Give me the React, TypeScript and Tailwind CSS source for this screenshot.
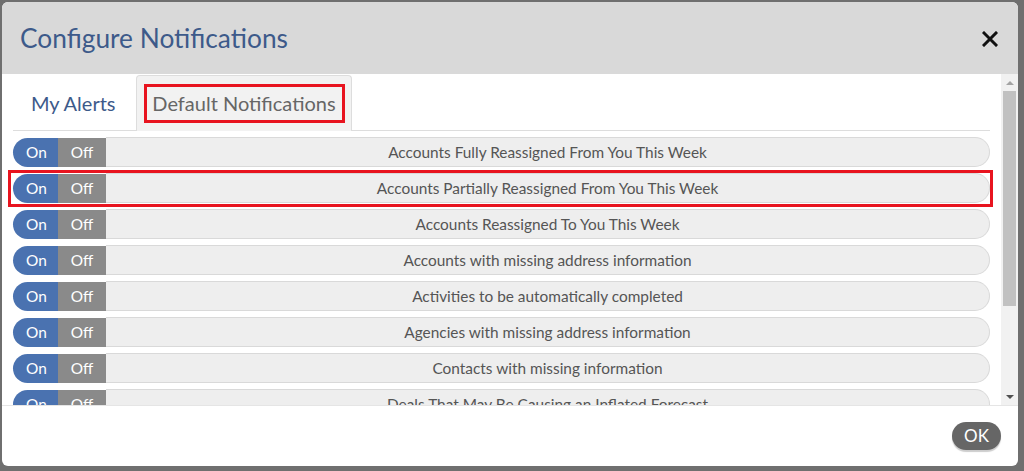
const alerts = [
  'Accounts Fully Reassigned From You This Week',
  'Accounts Partially Reassigned From You This Week',
  'Accounts Reassigned To You This Week',
  'Accounts with missing address information',
  'Activities to be automatically completed',
  'Agencies with missing address information',
  'Contacts with missing information',
  'Deals That May Be Causing an Inflated Forecast',
  'Deals with missing information',
  'Leads with missing information',
]

function Toggle() {
  return (
    <div className="flex h-[30px] shrink-0 pt-[1px] text-[15.4px] text-white">
      <div className="flex w-[45px] items-center justify-center rounded-l-full bg-[#4a72b0] pl-[2px]">On</div>
      <div className="flex w-[48px] items-center justify-center bg-[#8a8a8a]">Off</div>
    </div>
  )
}

function AlertRow({ label, marked }: { label: string; marked?: boolean }) {
  return (
    <div className="relative flex h-[30px]">
      <Toggle />
      <div className="flex flex-1 items-center justify-center rounded-r-full border-y border-r border-[#d9d9d9] bg-[#eeeeee] pt-[1px] text-[15.4px] text-[#555]">
        {label}
      </div>
      {marked && (
        <div className="absolute -top-[3px] -bottom-[4px] -left-[5px] -right-[3px] border-[3px] border-[#e8141f]" />
      )}
    </div>
  )
}

function Scrollbar() {
  return (
    <div className="flex w-[17px] shrink-0 flex-col items-center bg-[#f1f1f1]">
      <div className="flex h-[17px] w-full items-center justify-center">
        <div className="h-0 w-0 border-x-[4px] border-b-[4px] border-x-transparent border-b-[#a3a3a3]" />
      </div>
      <div className="h-[215px] w-[13px] bg-[#c1c1c1]" />
      <div className="flex-1" />
      <div className="flex h-[17px] w-full items-center justify-center">
        <div className="h-0 w-0 border-x-[4px] border-t-[4px] border-x-transparent border-t-[#505050]" />
      </div>
    </div>
  )
}

export default function App() {
  return (
    <div
      className="h-[471px] w-[1024px] overflow-hidden bg-[#6f6f6f] pt-[2px] pl-[2px]"
      style={{ fontFamily: 'Lato, "Open Sans", sans-serif' }}
    >
      <div className="flex h-[464px] w-[1016px] flex-col overflow-hidden rounded-[6px] bg-white">
        {/* header */}
        <div className="flex h-[72px] shrink-0 items-center justify-between bg-[#d9d9d9] pl-[18px] pr-[20px]">
          <h1 className="pt-[2px] text-[26.3px] text-[#3d5a8a]">Configure Notifications</h1>
          <svg width="16" height="16" viewBox="0 0 16 16" className="mt-[1px]">
            <path d="M2 2 L14 14 M14 2 L2 14" stroke="#111" strokeWidth="3" strokeLinecap="square" />
          </svg>
        </div>

        {/* body */}
        <div className="flex h-[331px] shrink-0">
          <div className="flex-1 overflow-hidden px-[11px] pt-[1px]">
            <div className="flex h-[56px] items-end border-b border-[#dddddd]">
              <div className="flex h-full w-[123px] items-center pl-[18px] text-[20px] text-[#3d5a8a]">My Alerts</div>
              <div className="-mb-px flex h-[56px] w-[216px] items-center justify-center rounded-t-[4px] border-x border-t border-[#dddddd] bg-[#f2f2f2]">
                <div className="flex h-[39px] w-[201px] items-center justify-center border-[3px] border-[#e8141f] pb-[2px] text-[20px] text-[#666]">
                  Default Notifications
                </div>
              </div>
            </div>
            <div className="mt-[6px] flex flex-col gap-[6px]">
              {alerts.map((a, i) => (
                <AlertRow key={a} label={a} marked={i === 1} />
              ))}
            </div>
          </div>
          <Scrollbar />
        </div>

        {/* footer */}
        <div className="flex flex-1 items-start justify-end border-t border-[#e5e5e5] pr-[17px] pt-[16px]">
          <button className="flex h-[28px] w-[49px] items-center justify-center rounded-full bg-[#666666] text-[17px] text-white shadow-[0_2px_1px_rgba(0,0,0,0.2)]">
            OK
          </button>
        </div>
      </div>
    </div>
  )
}
